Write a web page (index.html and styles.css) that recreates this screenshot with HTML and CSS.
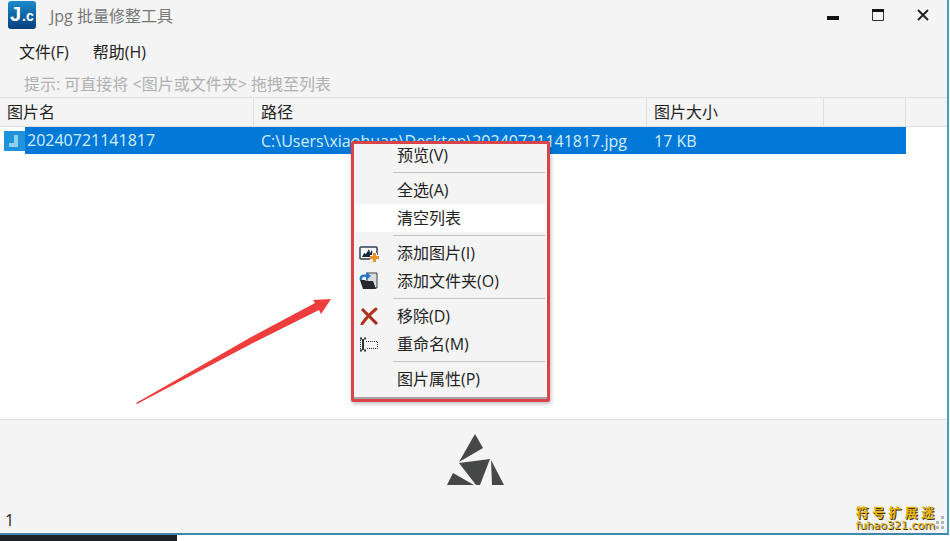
FILE: index.html
```html
<!DOCTYPE html>
<html lang="zh-CN">

<head>
    <meta charset="UTF-8">
    <meta name="viewport" content="width=device-width, initial-scale=1.0">
    <title>Jpg 批量修整工具</title>
    <link rel="stylesheet" href="styles.css">
</head>

<body>
    <div class="window">
        <header class="titlebar">
            <svg class="app-icon" viewBox="0 0 28 28">
                <defs>
                    <linearGradient id="blue" x1="0" y1="0" x2="0" y2="1">
                        <stop offset="0" stop-color="#1a8ccb" />
                        <stop offset="1" stop-color="#063f7c" />
                    </linearGradient>
                </defs>
                <rect width="28" height="28" rx="3" fill="url(#blue)" />
                <text class="icon-big" x="2" y="20">J</text>
                <text class="icon-small" x="14" y="20">.c</text>
            </svg>
            <h1>Jpg 批量修整工具</h1>
            <div class="window-buttons">
                <button type="button" aria-label="最小化">
                    <svg width="14" height="14" viewBox="0 0 14 14"><path d="M1 8h12v4H1z" fill="#111" /></svg>
                </button>
                <button type="button" aria-label="最大化">
                    <svg width="14" height="14" viewBox="0 0 14 14"><path d="M1.500 2v10.500h11V2" fill="none" stroke="#333" /><path d="M1 1h12v3H1z" fill="#111" /></svg>
                </button>
                <button type="button" aria-label="关闭">
                    <svg width="14" height="14" viewBox="0 0 14 14"><path d="M2 2l10 10M12 2L2 12" stroke="#222" stroke-width="2" /></svg>
                </button>
            </div>
        </header>

        <nav class="menubar">
            <button type="button">文件(F)</button>
            <button type="button">帮助(H)</button>
        </nav>

        <p class="hint">提示: 可直接将 &lt;图片或文件夹&gt; 拖拽至列表</p>

        <main class="list">
            <table>
                <colgroup>
                    <col class="col-name">
                    <col class="col-path">
                    <col class="col-size">
                    <col class="col-extra">
                    <col>
                </colgroup>
                <thead>
                    <tr>
                        <th>图片名</th>
                        <th>路径</th>
                        <th>图片大小</th>
                        <th></th>
                        <th></th>
                    </tr>
                </thead>
                <tbody>
                    <tr class="selected">
                        <td class="name-cell">
                            <div class="name">
                                <svg class="file-icon" width="21" height="20" viewBox="0 0 21 20">
                                    <rect width="21" height="20" fill="#1f93dc" />
                                    <path d="M12 4v10H5" fill="none" stroke="#8fd0f2" stroke-width="4" />
                                </svg>
                                <span>20240721141817</span>
                            </div>
                        </td>
                        <td>C:\Users\xiaohuan\Desktop\20240721141817.jpg</td>
                        <td>17 KB</td>
                        <td></td>
                        <td class="blank"></td>
                    </tr>
                </tbody>
            </table>
        </main>

        <footer class="statusbar">
            <span class="count">1</span>
            <svg class="logo" width="58" height="52" viewBox="0 0 58 52" fill="#464848">
                <path d="M28 0L36 14 12 28z" />
                <path d="M12 29L43 25 33 51H29z" />
                <path d="M6 39L27 51H0z" />
                <path d="M44 26L57 51H45z" />
            </svg>
            <svg class="grip" width="10" height="14" viewBox="0 0 10 14" fill="#b4b4b4">
                <path d="M5 0h3v3H5zM0 5h3v3H0zM5 5h3v3H5zM0 10h3v3H0zM5 10h3v3H5z" />
            </svg>
        </footer>

        <!-- right click menu of the list -->
        <div class="context-menu" role="menu">
            <button type="button" role="menuitem"><i></i>预览(V)</button>
            <hr>
            <button type="button" role="menuitem"><i></i>全选(A)</button>
            <button type="button" role="menuitem" class="active"><i></i>清空列表</button>
            <hr>
            <button type="button" role="menuitem">
                <i>
                    <svg width="20" height="18" viewBox="0 0 20 18">
                        <rect x="1" y="3" width="17" height="12" rx="1" fill="#f8fafb" stroke="#314150" stroke-width="1.500" />
                        <path d="M3 13l2-4 2 1 3-5 1 4 2-3 1 7z" fill="#182b3c" />
                        <path d="M15.500 9v9M11 13.500h9" stroke="#f4f4f4" stroke-width="5" />
                        <path d="M15.500 9v9M11 13.500h9" stroke="#f0902c" stroke-width="3" />
                    </svg>
                </i>添加图片(I)
            </button>
            <button type="button" role="menuitem">
                <i>
                    <svg width="20" height="18" viewBox="0 0 20 18">
                        <path d="M8 1h10v15H8z" fill="#d9dde0" stroke="#3c4247" />
                        <path d="M1 8h5l1 1h7l3 8H4z" fill="#25292d" />
                        <path d="M2 8C1 4 4 3 8 4" fill="none" stroke="#2774c4" stroke-width="2.500" />
                        <path d="M7 0l5 4-5 4z" fill="#2774c4" />
                    </svg>
                </i>添加文件夹(O)
            </button>
            <hr>
            <button type="button" role="menuitem">
                <i>
                    <svg width="20" height="18" viewBox="0 0 20 18">
                        <path d="M3 2l15 15" stroke="#a92b1c" stroke-width="3" />
                        <path d="M17 2C11 7 7 11 3 17" fill="none" stroke="#b5321f" stroke-width="3" stroke-linecap="round" />
                    </svg>
                </i>移除(D)
            </button>
            <button type="button" role="menuitem">
                <i>
                    <svg width="20" height="18" viewBox="0 0 20 18" fill="none" stroke="#333">
                        <path d="M1 3.500h2M5 3.500h2M4 4v11M1 15.500h2M5 15.500h2" stroke-width="2" />
                        <path d="M1.500 3v13" stroke-dasharray="1 1" />
                        <path d="M7 6.500h11.500v7H7" stroke-dasharray="1 1" />
                    </svg>
                </i>重命名(M)
            </button>
            <hr>
            <button type="button" role="menuitem"><i></i>图片属性(P)</button>
        </div>

        <!-- red arrow pointing at the menu -->
        <svg class="arrow" width="196" height="106" viewBox="0 0 196 106">
            <path d="M0 104L117 37 179 4 177 1 195 0 185 15 183 11 117 44 1 105z" fill="#ee3d3d" />
        </svg>

        <div class="watermark">
            <div class="mark-name">符 号 扩 展 迷</div>
            <div class="mark-site">fuhao321.com</div>
        </div>
    </div>
    <div class="taskbar"></div>
</body>

</html>
```

FILE: styles.css
```css
* {
    margin: 0;
    padding: 0;
    box-sizing: border-box;
}

body {
    height: 100vh;
    display: flex;
    flex-direction: column;
    background: #fff;
    color: #222;
    font-family: "Open Sans", "Noto Sans CJK SC", sans-serif;
    font-size: 16px;
    line-height: 24px;
    overflow: hidden;
}

button {
    border: none;
    background: none;
    color: inherit;
    font: inherit;
}

.window {
    position: relative;
    flex: 1;
    display: flex;
    flex-direction: column;
    margin-right: 1px;
    background: #f4f4f4;
    border-right: 2px solid #4c9fc0;
    border-bottom: 2px solid #3f87ad;
}

/* title bar */
.titlebar {
    display: flex;
    align-items: center;
    gap: 14px;
    height: 32px;
    padding: 0 17px 2px 8px;
}

.app-icon {
    width: 28px;
    height: 28px;
}

.app-icon text {
    fill: #fff;
    font-family: "Liberation Sans", sans-serif;
    font-weight: bold;
}

.icon-big {
    font-size: 20px;
}

.icon-small {
    font-size: 14px;
}

.titlebar h1 {
    flex: 1;
    padding-top: 2px;
    color: #777;
    font-size: 16px;
    font-weight: normal;
}

.window-buttons {
    display: flex;
    gap: 31px;
}

.window-buttons button {
    width: 14px;
    height: 18px;
}

.window-buttons svg {
    display: block;
}

.menubar {
    display: flex;
    gap: 24px;
    padding: 8px 19px;
}

.hint {
    height: 25px;
    padding-left: 24px;
    color: #b0b0b0;
}

/* file list */
.list {
    flex: 1;
    background: #fff;
}

.list table {
    width: 100%;
    table-layout: fixed;
    border-collapse: separate;
    border-spacing: 0;
}

.col-name {
    width: 254px;
}

.col-path {
    width: 393px;
}

.col-size {
    width: 177px;
}

.col-extra {
    width: 82px;
}

.list th {
    height: 30px;
    padding: 0 7px;
    text-align: left;
    font-weight: normal;
    background: #f4f4f4;
    border: 1px solid #dfdfdf;
    border-left: none;
}

.list th:last-child {
    border-right: none;
}

.list td {
    height: 27px;
    padding: 0 7px;
    background: #0078d7;
    color: #d5efff;
    white-space: nowrap;
}

.list td.name-cell {
    padding: 0 0 0 4px;
    background: #fff;
}

.list td.blank {
    background: #fff;
}

.name {
    display: flex;
    align-items: center;
}

.name span {
    flex: 1;
    padding-left: 2px;
    line-height: 27px;
    background: #0078d7;
}

/* bottom panel */
.statusbar {
    display: grid;
    grid-template-columns: 1fr auto 1fr;
    align-items: end;
    padding: 14px 1px 1px 5px;
    border-top: 1px solid #dedede;
}

.logo {
    margin-bottom: 46px;
}

.grip {
    justify-self: end;
    margin-bottom: 2px;
}

/* context menu */
.context-menu {
    position: absolute;
    left: 351px;
    top: 141px;
    width: 199px;
    height: 261px;
    padding: 0 4px;
    background: #f4f4f4;
    box-shadow: 1px 2px 4px rgba(0, 0, 0, 0.25);
}

.context-menu::after {
    content: "";
    position: absolute;
    inset: 0;
    border: 3px solid #d9444a;
    border-radius: 2px;
    box-shadow: inset 0 -2px 0 #a9a4a4;
    pointer-events: none;
}

.context-menu button {
    display: flex;
    align-items: center;
    width: 100%;
    height: 28px;
    padding-left: 4px;
    text-align: left;
}

.context-menu button.active {
    background: #fff;
}

.context-menu i {
    width: 38px;
}

.context-menu svg {
    display: block;
}

.context-menu hr {
    height: 1px;
    margin: 3px 1px 3px 38px;
    border: none;
    background: #c4c4c4;
}

.arrow {
    position: absolute;
    left: 136px;
    top: 299px;
}

.watermark {
    position: absolute;
    right: 12px;
    bottom: 1px;
    color: #e6b40c;
    text-shadow: 1px 1px 0 #3a2c00;
}

.mark-name {
    font-size: 13px;
    font-weight: bold;
    line-height: 16px;
}

.mark-site {
    font-family: "DejaVu Sans", sans-serif;
    font-size: 11px;
    line-height: 12px;
}

.taskbar {
    width: 177px;
    height: 6px;
    background: #1b2226;
}
```
